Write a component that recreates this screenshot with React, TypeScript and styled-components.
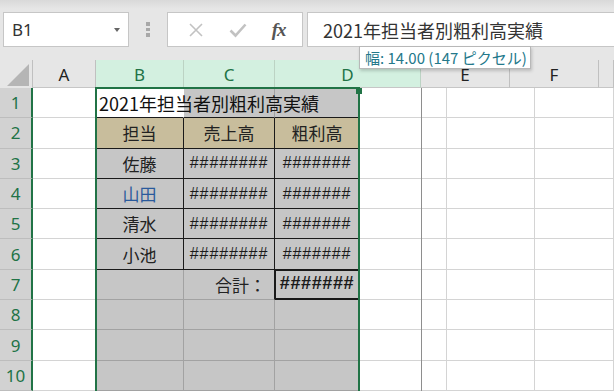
import React from "react";
import styled, { createGlobalStyle } from "styled-components";

const GlobalStyle = createGlobalStyle`
  html, body {
    margin: 0;
    padding: 0;
    background: #e6e6e6;
  }
  * {
    box-sizing: border-box;
  }
`;

const UI_FONT = `"Noto Sans", "Noto Sans CJK JP", sans-serif`;
const JP_FONT = `"Noto Sans CJK JP", "Noto Sans", sans-serif`;
const GREEN = "#217346";
const LINE = "#d4d4d4";
const SEL_LINE = "#a2a2a2";
const BLACK = "#1a1a1a";

const Page = styled.div`
  position: relative;
  width: 614px;
  height: 391px;
  overflow: hidden;
  background: #e6e6e6;
  font-family: ${JP_FONT};
`;

const TopBar = styled.div`
  height: 60px;
  padding-top: 12px;
  background: linear-gradient(#d9d9d9 0px, #e6e6e6 9px);
  display: flex;
  align-items: flex-start;
`;

const NameBox = styled.div`
  width: 126px;
  height: 35px;
  margin-left: 3px;
  background: #fff;
  border: 1px solid #c6c6c6;
  display: flex;
  align-items: center;
  justify-content: space-between;
  padding: 0 8px 0 8px;
  font-family: ${UI_FONT};
  font-size: 17px;
  color: #333;
`;

const Caret = styled.span`
  width: 0;
  height: 0;
  border-left: 3.5px solid transparent;
  border-right: 3.5px solid transparent;
  border-top: 4px solid #666;
`;

const Dots = styled.div`
  width: 38px;
  height: 35px;
  display: flex;
  flex-direction: column;
  align-items: center;
  justify-content: center;
  gap: 2px;
  span {
    width: 4px;
    height: 3.5px;
    background: #a8a8a8;
  }
`;

const ButtonBox = styled.div`
  width: 136px;
  height: 35px;
  background: #fff;
  border: 1px solid #c6c6c6;
  display: flex;
  align-items: center;
  justify-content: space-around;
  padding: 0 4px 0 8px;
`;

const Fx = styled.span`
  font-family: "Liberation Serif", "DejaVu Serif", serif;
  font-style: italic;
  font-weight: bold;
  font-size: 19px;
  color: #555;
  letter-spacing: -1px;
`;

const FormulaInput = styled.div`
  flex: 1;
  height: 35px;
  margin-left: 4px;
  background: #fff;
  border: 1px solid #c6c6c6;
  border-right: none;
  display: flex;
  align-items: center;
  padding-left: 15px;
  font-family: ${JP_FONT};
  font-size: 18px;
  color: #333;
`;

const HeaderRow = styled.div`
  display: grid;
  grid-template-columns: 33px 63px 88px 91px 146px 89px 89px 1fr;
  height: 28px;
`;

const Corner = styled.div`
  position: relative;
  border-right: 1px solid #c0c0c0;
  display: flex;
  align-items: flex-end;
  justify-content: flex-end;
  padding: 0 3px 2px 0;
`;

const Triangle = styled.div`
  width: 0;
  height: 0;
  border-left: 22px solid transparent;
  border-bottom: 22px solid #b5b5b5;
`;

const ColHead = styled.div<{ $sel?: boolean }>`
  background: ${({ $sel }) => ($sel ? "#d3f0e0" : "#e6e6e6")};
  color: ${({ $sel }) => ($sel ? GREEN : "#222")};
  border-right: 1px solid ${({ $sel }) => ($sel ? "#bcd3c4" : "#c0c0c0")};
  border-bottom: 1px solid #c6c6c6;
  display: flex;
  align-items: center;
  justify-content: center;
  font-family: ${UI_FONT};
  font-size: 17px;
  padding-top: 1px;
`;

const Body = styled.div`
  display: grid;
  grid-template-columns: 33px 63px 88px 91px 85px 87px 88px 1fr;
  grid-template-rows: repeat(10, 30.3px);
`;

const RowHead = styled.div`
  background: #d2d2d2;
  color: ${GREEN};
  border-right: 2px solid ${GREEN};
  border-bottom: 1px solid #bdbdbd;
  display: flex;
  align-items: center;
  justify-content: center;
  font-family: ${UI_FONT};
  font-size: 17px;
`;

type Fill = "white" | "gray" | "tan";

const fills: Record<Fill, string> = {
  white: "#ffffff",
  gray: "#c6c6c6",
  tan: "#c8bd9c",
};

const Cell = styled.div<{
  $fill?: Fill;
  $right?: string;
  $bottom?: string;
  $align?: "left" | "center" | "right";
  $thick?: boolean;
}>`
  position: relative;
  background: ${({ $fill }) => fills[$fill || "white"]};
  border-right: 1px solid ${({ $right }) => $right || LINE};
  border-bottom: ${({ $thick }) => ($thick ? "2px" : "1px")} solid
    ${({ $bottom }) => $bottom || LINE};
  box-shadow: ${({ $thick }) =>
    $thick ? `inset 0 1px 0 ${BLACK}, inset 1px 0 0 ${BLACK}` : "none"};
  display: flex;
  align-items: center;
  justify-content: ${({ $align }) =>
    $align === "left" ? "flex-start" : $align === "right" ? "flex-end" : "center"};
  padding: 0 4px;
  font-family: ${JP_FONT};
  font-size: 17px;
  color: #222;
  white-space: nowrap;
`;

const Title = styled.span`
  position: relative;
  z-index: 2;
  margin-left: -1px;
  font-size: 18px;
  color: #111;
`;

const Hash = styled.span<{ $bold?: boolean }>`
  font-family: "Liberation Sans", "Noto Sans", sans-serif;
  font-size: ${({ $bold }) => ($bold ? "18px" : "16px")};
  font-weight: ${({ $bold }) => ($bold ? 700 : 400)};
  letter-spacing: ${({ $bold }) => ($bold ? "0.6px" : "0.9px")};
  color: #1a1a1a;
`;

const Name = styled.span<{ $blue?: boolean }>`
  color: ${({ $blue }) => ($blue ? "#2a5a9c" : "#222")};
`;

const Selection = styled.div`
  position: absolute;
  left: 95px;
  top: 87px;
  width: 265px;
  height: 320px;
  border: 2px solid ${GREEN};
  pointer-events: none;
  z-index: 5;
`;

const Handle = styled.div`
  position: absolute;
  right: -4px;
  top: -1px;
  width: 6px;
  height: 6px;
  background: ${GREEN};
`;

const DragLine = styled.div`
  position: absolute;
  left: 421px;
  top: 88px;
  width: 1px;
  height: 303px;
  background: #8e8e8e;
  z-index: 4;
`;

const Tooltip = styled.div`
  position: absolute;
  left: 359px;
  top: 46px;
  width: 172px;
  height: 23px;
  padding: 0 0 0 5px;
  background: #fff;
  border: 1px solid #b8b8b8;
  box-shadow: 1px 2px 3px rgba(0, 0, 0, 0.18);
  display: flex;
  align-items: center;
  font-family: ${JP_FONT};
  font-size: 15px;
  color: #23788a;
  white-space: nowrap;
  z-index: 6;
`;

const names = [
  { n: "佐藤" },
  { n: "山田", blue: true },
  { n: "清水" },
  { n: "小池" },
];

export default function App() {
  const rows = [];

  // row 1
  rows.push(
    <React.Fragment key="r1">
      <RowHead>1</RowHead>
      <Cell />
      <Cell $fill="white" $right="#ffffff" $bottom={BLACK} $align="left">
        <Title>2021年担当者別粗利高実績</Title>
      </Cell>
      <Cell $fill="gray" $right={SEL_LINE} $bottom={BLACK} />
      <Cell $fill="gray" $right={BLACK} $bottom={BLACK} />
      <Cell />
      <Cell />
      <Cell />
    </React.Fragment>
  );

  // row 2 header
  rows.push(
    <React.Fragment key="r2">
      <RowHead>2</RowHead>
      <Cell />
      <Cell $fill="tan" $right={BLACK} $bottom={BLACK}>担当</Cell>
      <Cell $fill="tan" $right={BLACK} $bottom={BLACK}>売上高</Cell>
      <Cell $fill="tan" $right={BLACK} $bottom={BLACK}>粗利高</Cell>
      <Cell />
      <Cell />
      <Cell />
    </React.Fragment>
  );

  names.forEach((p, i) => {
    rows.push(
      <React.Fragment key={"p" + i}>
        <RowHead>{i + 3}</RowHead>
        <Cell />
        <Cell $fill="gray" $right={BLACK} $bottom={BLACK}>
          <Name $blue={p.blue}>{p.n}</Name>
        </Cell>
        <Cell $fill="gray" $right={BLACK} $bottom={BLACK}>
          <Hash>########</Hash>
        </Cell>
        <Cell $fill="gray" $right={BLACK} $bottom={BLACK}>
          <Hash>#######</Hash>
        </Cell>
        <Cell />
        <Cell />
        <Cell />
      </React.Fragment>
    );
  });

  // row 7 total
  rows.push(
    <React.Fragment key="r7">
      <RowHead>7</RowHead>
      <Cell />
      <Cell $fill="gray" $right={SEL_LINE} $bottom={SEL_LINE} />
      <Cell $fill="gray" $right={BLACK} $bottom={SEL_LINE} $align="right">
        <span style={{ marginRight: 4 }}>合計：</span>
      </Cell>
      <Cell $fill="gray" $right={BLACK} $bottom={BLACK} $thick>
        <Hash $bold>#######</Hash>
      </Cell>
      <Cell />
      <Cell />
      <Cell />
    </React.Fragment>
  );

  [8, 9, 10].forEach((r) => {
    rows.push(
      <React.Fragment key={"e" + r}>
        <RowHead>{r}</RowHead>
        <Cell />
        <Cell $fill="gray" $right={SEL_LINE} $bottom={SEL_LINE} />
        <Cell $fill="gray" $right={SEL_LINE} $bottom={SEL_LINE} />
        <Cell $fill="gray" $right={SEL_LINE} $bottom={SEL_LINE} />
        <Cell />
        <Cell />
        <Cell />
      </React.Fragment>
    );
  });

  return (
    <Page>
      <GlobalStyle />
      <TopBar>
        <NameBox>
          B1
          <Caret />
        </NameBox>
        <Dots>
          <span />
          <span />
          <span />
        </Dots>
        <ButtonBox>
          <svg width="16" height="16" viewBox="0 0 16 16">
            <path d="M2 2 L14 14 M14 2 L2 14" stroke="#c2c2c2" strokeWidth="1.6" fill="none" />
          </svg>
          <svg width="18" height="16" viewBox="0 0 18 16">
            <path d="M1.5 8.5 L6.5 13.5 L16.5 2.5" stroke="#c2c2c2" strokeWidth="2.6" fill="none" />
          </svg>
          <Fx>fx</Fx>
        </ButtonBox>
        <FormulaInput>2021年担当者別粗利高実績</FormulaInput>
      </TopBar>
      <HeaderRow>
        <Corner>
          <Triangle />
        </Corner>
        <ColHead>A</ColHead>
        <ColHead $sel>B</ColHead>
        <ColHead $sel>C</ColHead>
        <ColHead $sel>D</ColHead>
        <ColHead>E</ColHead>
        <ColHead>F</ColHead>
        <ColHead />
      </HeaderRow>
      <Body>{rows}</Body>
      <DragLine />
      <Selection>
        <Handle />
      </Selection>
      <Tooltip>幅: 14.00 (147 ピクセル)</Tooltip>
    </Page>
  );
}
